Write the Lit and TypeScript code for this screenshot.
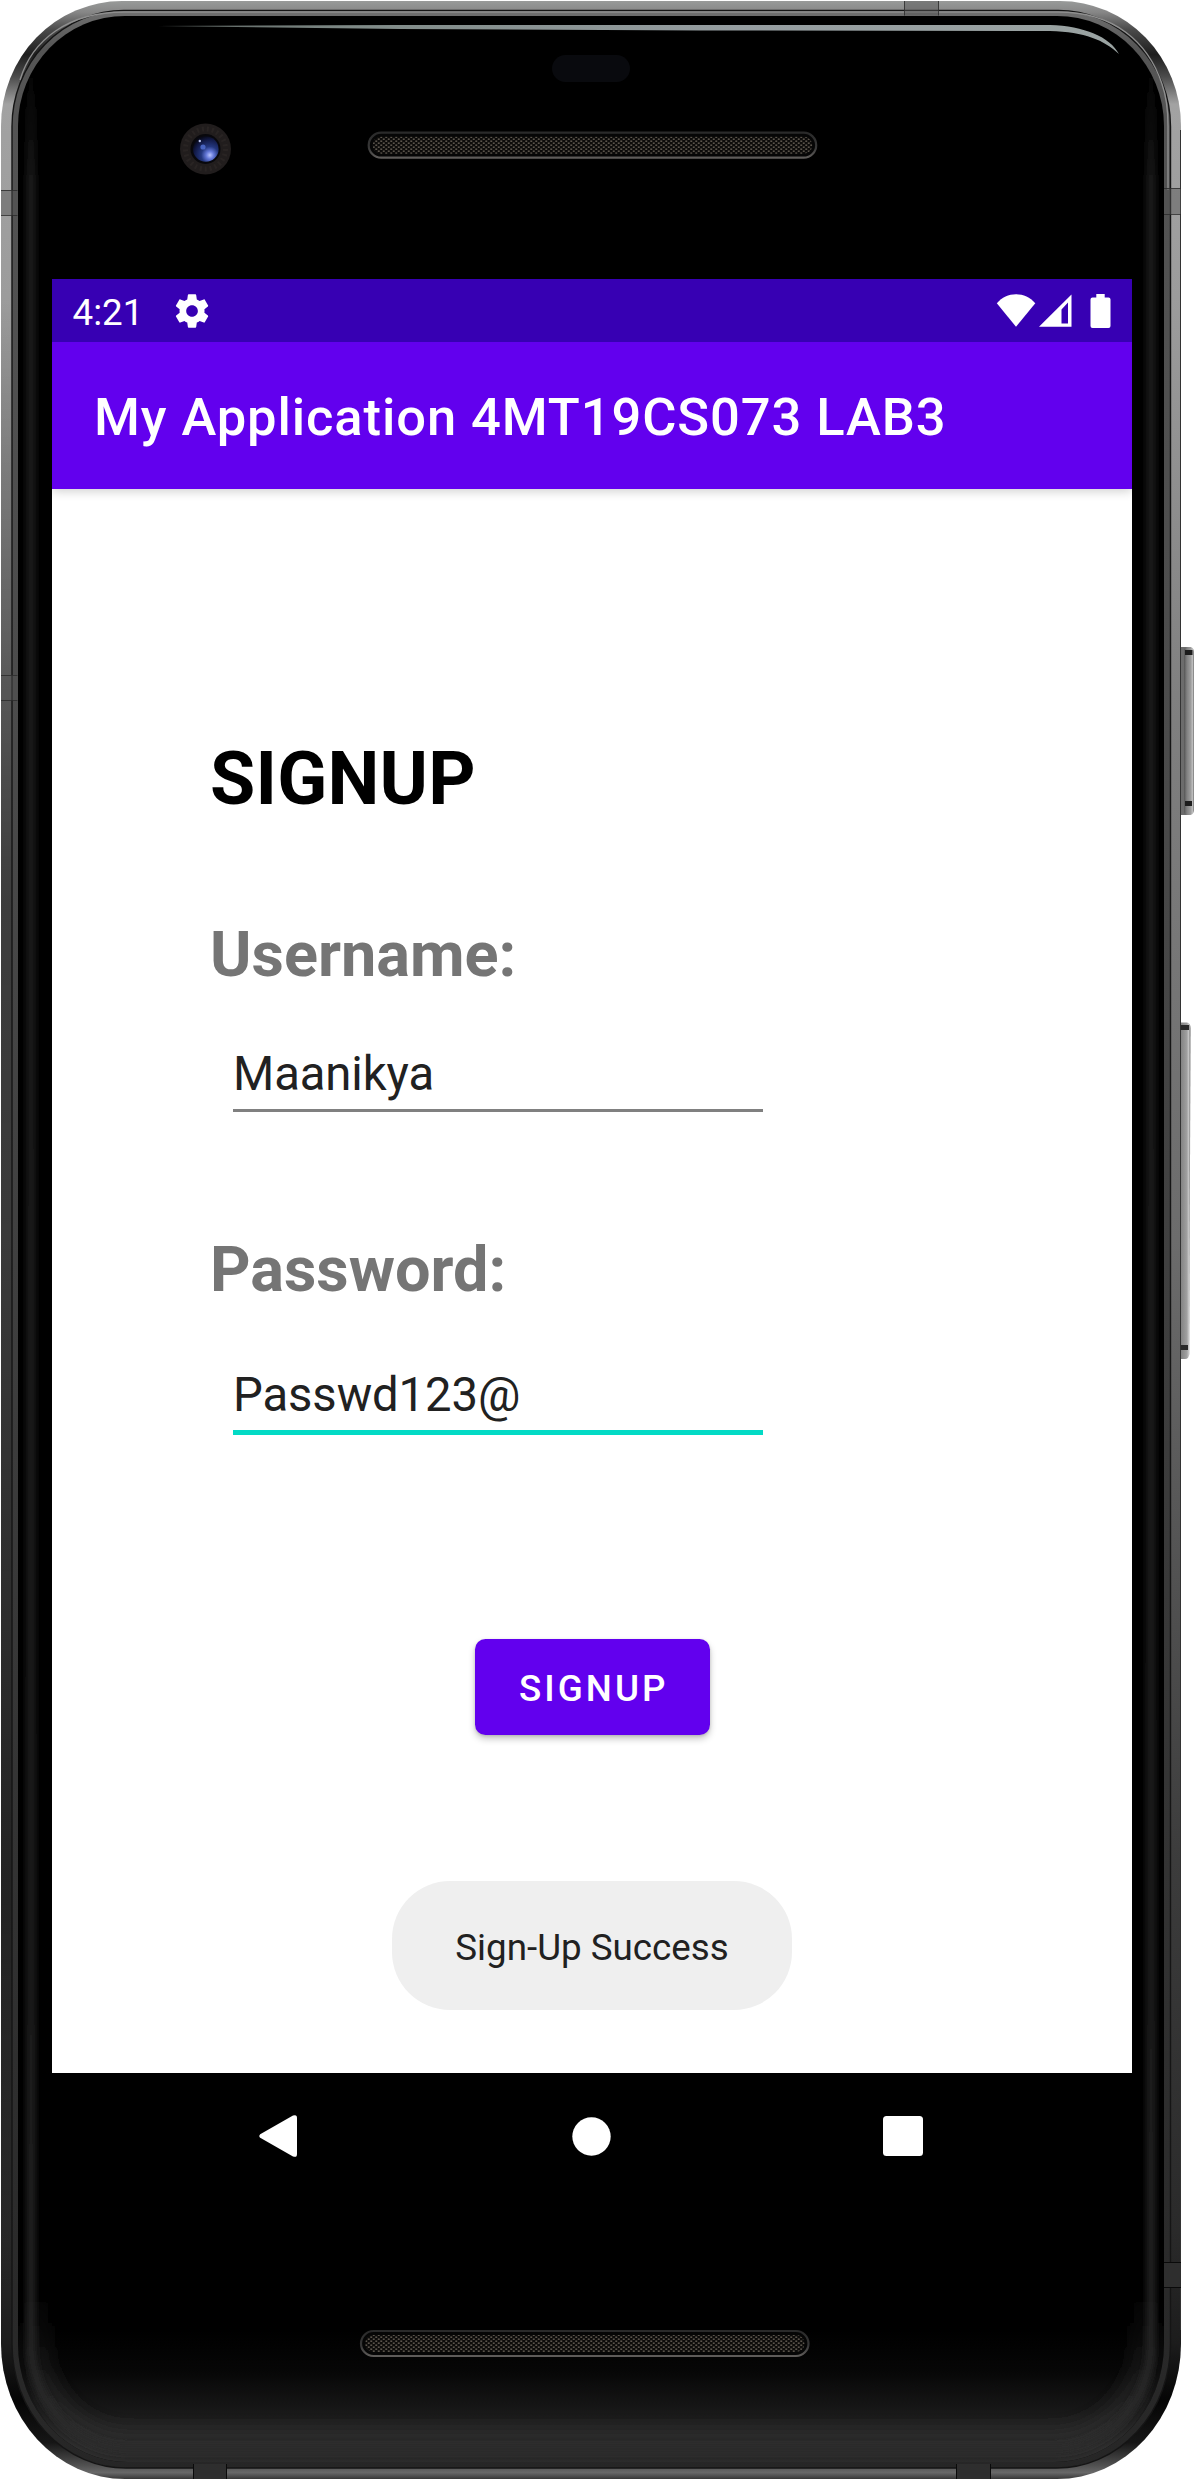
import { LitElement, html, css, svg } from "lit";
import { customElement, property } from "lit/decorators.js";

/** Hardware drawing: metal frame, glass, speakers, camera and side keys. */
@customElement("phone-shell")
class PhoneShell extends LitElement {
  static styles = css`
    :host {
      display: block;
    }
    .art {
      display: block;
      width: 1194px;
      height: 2480px;
    }
  `;

  private grille(x: number, y: number) {
    return svg`
      <rect x=${x + 1} y=${y + 1} width="447.5" height="25" rx="12.5" fill="#060606" stroke="url(#grilleRim)" stroke-width="2.2" />
      <rect x=${x + 5} y=${y + 5} width="439.5" height="17" rx="8.5" fill="url(#mesh)" />
    `;
  }

  render() {
    return html`
      <svg class="art" viewBox="0 0 1194 2480" aria-hidden="true">
        <defs>
          <linearGradient id="metal" gradientUnits="userSpaceOnUse" x1="0" y1="0" x2="0" y2="2480">
            <stop offset="0" stop-color="#9a9c9b" />
            <stop offset=".005" stop-color="#868686" />
            <stop offset=".012" stop-color="#4a4a4a" />
            <stop offset=".022" stop-color="#1e1e1e" />
            <stop offset=".031" stop-color="#4c4c4c" />
            <stop offset=".042" stop-color="#a2a2a2" />
            <stop offset=".12" stop-color="#9c9c9c" />
            <stop offset=".28" stop-color="#808080" />
            <stop offset=".5" stop-color="#6c6c6c" />
            <stop offset=".75" stop-color="#3c3c3c" />
            <stop offset=".9" stop-color="#2a2a2a" />
            <stop offset=".945" stop-color="#1c1c1c" />
            <stop offset=".968" stop-color="#050505" />
            <stop offset=".985" stop-color="#161616" />
            <stop offset=".994" stop-color="#505050" />
            <stop offset=".997" stop-color="#686868" />
            <stop offset="1" stop-color="#303030" />
          </linearGradient>
          <linearGradient id="shadeFade" gradientUnits="userSpaceOnUse" x1="0" y1="300" x2="0" y2="2300">
            <stop offset="0" stop-color="#000" stop-opacity="0" />
            <stop offset=".3" stop-color="#000" stop-opacity=".5" />
            <stop offset=".8" stop-color="#000" stop-opacity=".4" />
            <stop offset="1" stop-color="#000" stop-opacity="0" />
          </linearGradient>
          <linearGradient id="innerRing" gradientUnits="userSpaceOnUse" x1="0" y1="0" x2="0" y2="2480">
            <stop offset="0" stop-color="#777" />
            <stop offset=".02" stop-color="#555" />
            <stop offset=".3" stop-color="#4b4b4b" />
            <stop offset="1" stop-color="#262626" />
          </linearGradient>
          <linearGradient id="floor" x1="0" y1="0" x2="0" y2="1">
            <stop offset="0" stop-color="#2e2e2e" stop-opacity="0" />
            <stop offset=".3" stop-color="#2e2e2e" stop-opacity=".13" />
            <stop offset=".6" stop-color="#2e2e2e" stop-opacity=".5" />
            <stop offset=".88" stop-color="#2e2e2e" />
            <stop offset="1" stop-color="#2a2a2a" />
          </linearGradient>
          <linearGradient id="glow" gradientUnits="userSpaceOnUse" x1="0" y1="60" x2="0" y2="2452">
            <stop offset="0" stop-color="#202020" stop-opacity="0" />
            <stop offset=".05" stop-color="#202020" />
            <stop offset="1" stop-color="#2a2a2a" />
          </linearGradient>
          <linearGradient id="cornerGlow" gradientUnits="userSpaceOnUse" x1="0" y1="2290" x2="0" y2="2440">
            <stop offset="0" stop-color="#2c2c2c" stop-opacity="0" />
            <stop offset="1" stop-color="#2c2c2c" />
          </linearGradient>
          <linearGradient id="gleam" gradientUnits="userSpaceOnUse" x1="160" y1="0" x2="1120" y2="0">
            <stop offset="0" stop-color="#59615e" />
            <stop offset=".2" stop-color="#7f8a87" />
            <stop offset=".6" stop-color="#959da0" />
            <stop offset="1" stop-color="#9aa3a2" />
          </linearGradient>
          <linearGradient id="grilleRim" x1="0" y1="0" x2="0" y2="1">
            <stop offset="0" stop-color="#2a2a2a" />
            <stop offset=".6" stop-color="#383838" />
            <stop offset="1" stop-color="#5f5c5a" />
          </linearGradient>
          <linearGradient id="key" x1="0" x2="1" y1="0" y2="0">
            <stop offset="0" stop-color="#555" />
            <stop offset=".3" stop-color="#808080" />
            <stop offset=".75" stop-color="#a0a0a0" />
            <stop offset=".88" stop-color="#c8c8c8" />
            <stop offset="1" stop-color="#666" />
          </linearGradient>
          <pattern id="mesh" width="5" height="4" patternUnits="userSpaceOnUse">
            <rect width="5" height="4" fill="#0c0b0a" />
            <rect x=".3" y=".4" width="1.9" height="1.6" fill="#5a544b" />
            <rect x="2.8" y="2.4" width="1.9" height="1.6" fill="#5a544b" />
          </pattern>
          <radialGradient id="lens" cx=".66" cy=".74" r=".75">
            <stop offset="0" stop-color="#b9c4ff" />
            <stop offset=".2" stop-color="#6478d8" />
            <stop offset=".45" stop-color="#24377e" />
            <stop offset=".8" stop-color="#121a48" />
            <stop offset="1" stop-color="#080a1a" />
          </radialGradient>
          <clipPath id="glassClip">
            <path d="M125 16 H1057 A107 110 0 0 1 1164 126 V2344 A110 118 0 0 1 1054 2462 H128 A110 118 0 0 1 18 2344 V126 A107 110 0 0 1 125 16Z" />
          </clipPath>
          <filter id="soft" filterUnits="userSpaceOnUse" x="0" y="0" width="1194" height="2480">
            <feGaussianBlur stdDeviation="3.5" />
          </filter>
          <filter id="softer" filterUnits="userSpaceOnUse" x="0" y="2100" width="1194" height="380">
            <feGaussianBlur stdDeviation="10" />
          </filter>
        </defs>

        <!-- side keys -->
        <rect x="1176" y="647" width="17.5" height="168" rx="5" fill="#6c6c6c" />
        <rect x="1184" y="647" width="9.5" height="168" rx="4" fill="url(#key)" />
        <rect x="1185" y="650" width="7.5" height="5" fill="#1c1c1c" />
        <rect x="1185" y="801" width="7" height="5" fill="#1c1c1c" />
        <path d="M1176 1022.5 H1187 Q1190.5 1023 1190.5 1028 L1189.3 1354 Q1189 1359 1185 1359 H1176Z" fill="url(#key)" />
        <rect x="1181" y="1025" width="8" height="5" fill="#2a2a2a" />
        <rect x="1181" y="1345" width="7" height="5" fill="#2a2a2a" />

        <!-- metal frame -->
        <path d="M122 1 H1060 A121 125 0 0 1 1181 126 V2344 A124 135 0 0 1 1057 2479 H125 A124 135 0 0 1 1 2344 V126 A121 125 0 0 1 122 1Z" fill="url(#metal)" />
        <rect x="1" y="300" width="12" height="2000" fill="url(#shadeFade)" />
        <rect x="1180" y="130" width="1" height="2200" fill="#333" />
        <path d="M124 10.5 H1058 A112.5 116 0 0 1 1170.5 126.5 V2344 A114 124 0 0 1 1056.5 2468 H126 A114 124 0 0 1 12 2344 V126.5 A112 116 0 0 1 124 10.5Z" fill="url(#innerRing)" stroke="#151515" stroke-width="1.4" />
        <path d="M20 80 C32 40 68 12 124 12 H1058 C1114 12 1148 42 1162 84 C1167 98 1168 112 1168 126 V190" fill="none" stroke="#8f8f8f" stroke-width="1.4" />
        <path d="M125 16 H1057 A107 110 0 0 1 1164 126 V2344 A110 118 0 0 1 1054 2462 H128 A110 118 0 0 1 18 2344 V126 A107 110 0 0 1 125 16Z" fill="#000" />

        <!-- antenna bands -->
        <g fill="#555" fill-opacity=".45">
          <rect x="904" y="1" width="35" height="14.5" />
          <rect x="1" y="190" width="16.5" height="25" />
          <rect x="1164" y="188" width="17" height="26" />
          <rect x="1" y="675" width="16.5" height="25" />
        </g>
        <g fill="#2e2e2e">
          <rect x="193" y="2464" width="34" height="15" />
          <rect x="956" y="2464" width="35" height="15" />
          <rect x="1164" y="2262" width="17" height="26" />
        </g>
        <path d="M904.5 1V15.5M938.5 1V15.5M1 190.5H17.5M1 215.5H17.5M1164 188.5H1181M1164 214.5H1181M1 675.5H17.5M1 700.5H17.5" stroke="#2a2a2a" stroke-opacity=".8" />
        <path d="M193.5 2464V2479M226.5 2464V2479M956.5 2464V2479M990.5 2464V2479M1164 2262.5H1181M1164 2287.5H1181" stroke="#0a0a0a" />

        <!-- glass reflections -->
        <g clip-path="url(#glassClip)">
          <rect x="18" y="2330" width="1146" height="133" fill="url(#floor)" />
          <path d="M36 2290 V2344 A92 100 0 0 0 128 2444 H1054 A92 100 0 0 0 1146 2344 V2290" fill="none" stroke="url(#cornerGlow)" stroke-width="24" filter="url(#softer)" />
          <path d="M31 60 V2344 A97 105 0 0 0 128 2449 H1054 A97 105 0 0 0 1151 2344 V60" fill="none" stroke="url(#glow)" stroke-width="7" filter="url(#soft)" />
        </g>
        <path d="M158 26 L400 25 H1050 C1084 26 1110 37 1119 54 C1104 40 1085 32 1050 31 L700 30.5 L400 29 Z" fill="url(#gleam)" />

        <!-- proximity sensor, camera, grilles -->
        <rect x="552" y="55" width="78" height="27" rx="13.5" fill="#090a0e" />
        <circle cx="205.5" cy="149" r="25.5" fill="#211d1d" />
        <circle cx="205.5" cy="149" r="20" fill="none" stroke="#2e2928" stroke-width="5" stroke-dasharray="2 3" stroke-opacity=".6" />
        <circle cx="205.5" cy="149" r="15" fill="#08080c" />
        <circle cx="205.8" cy="149" r="12.8" fill="url(#lens)" />
        <circle cx="203" cy="147" r="2.6" fill="#5472d6" fill-opacity=".8" />
        <circle cx="199.8" cy="141" r="1.2" fill="#b8c2ee" />
        ${this.grille(367.7, 131.7)} ${this.grille(360, 2330)}
      </svg>
    `;
  }
}

@customElement("status-bar")
class StatusBar extends LitElement {
  static styles = css`
    :host {
      display: flex;
      justify-content: space-between;
      height: 63px;
      background: #3700b3;
      color: #fff;
      font: 400 36.75px/43px Roboto, sans-serif;
    }
    .start,
    .end {
      display: flex;
      align-items: center;
    }
    .start {
      padding-left: 20.5px;
      gap: 29px;
    }
    .clock {
      padding-top: 3px;
    }
    .end {
      padding-right: 21px;
    }
    svg {
      display: block;
      fill: #fff;
    }
    .gear {
      width: 40px;
      height: 40px;
    }
  `;

  render() {
    return html`
      <div class="start">
        <span class="clock">4:21</span>
        <svg class="gear" viewBox="0 0 24 24">
          <path
            d="M19.44 12.99c.04-.32.07-.65.07-.99s-.03-.67-.07-.99l2.1-1.65c.19-.15.24-.42.12-.64l-2-3.46c-.12-.22-.38-.3-.61-.22l-2.48 1c-.52-.4-1.07-.73-1.68-.98l-.38-2.64A.49.49 0 0 0 14.02 2h-4c-.25 0-.46.18-.49.42l-.38 2.64c-.61.25-1.17.59-1.68.98l-2.48-1c-.23-.09-.49 0-.61.22l-2 3.46c-.13.22-.07.49.12.64l2.1 1.65c-.04.32-.07.66-.07.99s.03.67.07.99l-2.1 1.65c-.19.15-.24.42-.12.64l2 3.46c.12.22.38.3.61.22l2.48-1c.52.4 1.07.73 1.68.98l.38 2.64c.03.24.24.42.49.42h4c.25 0 .46-.18.49-.42l.38-2.64c.61-.25 1.17-.59 1.68-.98l2.48 1c.23.09.49 0 .61-.22l2-3.46c.12-.22.07-.49-.12-.64l-2.1-1.65zM12.02 15.5c-1.93 0-3.5-1.57-3.5-3.5s1.57-3.5 3.5-3.5 3.5 1.57 3.5 3.5-1.57 3.5-3.5 3.5z"
          />
        </svg>
      </div>
      <div class="end">
        <svg width="115" height="36" viewBox="0 0 115 36">
          <path d="M0.8 10.2 C6 4.2 12.5 1.2 20 1.2 S34 4.2 39.3 10.2 L20 33.8Z" />
          <path fill-rule="evenodd" d="M43 33.8 L75.5 1.5 V33.8Z M65.5 16.6 V30.6 H72 V9.6Z" />
          <path d="M100.3 1 H108.7 V4.5 H112.5 Q114.5 4.5 114.5 6.5 V33 Q114.5 35 112.5 35 H96.5 Q94.5 35 94.5 33 V6.5 Q94.5 4.5 96.5 4.5 H100.3Z" />
        </svg>
      </div>
    `;
  }
}

@customElement("text-field")
class TextField extends LitElement {
  static styles = css`
    :host {
      display: block;
      font-family: Roboto, sans-serif;
    }
    .label {
      font-weight: 700;
      font-size: 63px;
      line-height: 75px;
      color: #757575;
    }
    .box {
      width: 530px;
      margin: 55px 0 0 23px;
      padding-bottom: 7px;
      border-bottom: 3px solid #808080;
      font-size: 47.25px;
      line-height: 55px;
      letter-spacing: -0.1px;
      color: #212121;
    }
    .box.focused {
      margin-top: 61px;
      border-bottom: 5px solid #03dac5;
    }
  `;

  @property() label = "";
  @property() value = "";
  @property({ type: Boolean }) focused = false;

  render() {
    return html`
      <div class="label">${this.label}</div>
      <div class="box ${this.focused ? "focused" : ""}">${this.value}</div>
    `;
  }
}

@customElement("nav-bar")
class NavBar extends LitElement {
  static styles = css`
    :host {
      display: flex;
      justify-content: space-between;
      align-items: center;
      height: 126px;
      padding: 0 209px 0 206.5px;
      background: #000;
    }
    svg {
      display: block;
      fill: #fff;
    }
    .home {
      margin-left: 4px;
    }
  `;

  render() {
    return html`
      <svg width="38" height="42" viewBox="0 0 38 42">
        <path d="M1.2 19.2 L34 0.6 Q38 -1 38 3 V39 Q38 43 34 41.4 L1.2 22.8 Q-.6 21 1.2 19.2Z" />
      </svg>
      <svg class="home" width="39" height="39" viewBox="0 0 39 39"><circle cx="19.5" cy="19.5" r="19.2" /></svg>
      <svg width="40" height="40" viewBox="0 0 40 40"><rect width="40" height="40" rx="3.5" /></svg>
    `;
  }
}

@customElement("app-root")
class AppRoot extends LitElement {
  static styles = css`
    :host {
      display: block;
      font-family: Roboto, sans-serif;
    }
    .device {
      position: relative;
      box-sizing: border-box;
      width: 1194px;
      height: 2480px;
      padding: 279px 62px 281px 52px;
      overflow: hidden;
      background: #fff;
    }
    .shell {
      position: absolute;
      inset: 0;
    }
    .screen {
      position: relative;
      display: flex;
      flex-direction: column;
      width: 1080px;
      height: 1920px;
      background: #fff;
    }
    .appbar {
      box-sizing: border-box;
      height: 147px;
      padding: 4px 42px 0;
      background: #6200ee;
      color: #fff;
      font-weight: 500;
      font-size: 52.5px;
      line-height: 143px;
      letter-spacing: 0.0172em;
      white-space: nowrap;
      box-shadow: 0 2px 10px rgba(0, 0, 0, 0.2);
      clip-path: inset(0 0 -20px 0);
    }
    .content {
      display: flex;
      flex-direction: column;
      flex: 1;
      padding: 247px 0 0 158px;
    }
    h1 {
      margin: 0 0 95px;
      font-weight: 700;
      font-size: 73.5px;
      line-height: 86px;
      letter-spacing: 0.2px;
      color: #000;
    }
    .second {
      margin-top: 120px;
    }
    .actions {
      display: flex;
      flex-direction: column;
      align-items: center;
      gap: 146px;
      margin: 204px 0 0 -158px;
    }
    .signup {
      box-sizing: border-box;
      width: 235px;
      height: 96px;
      margin: 0 0 0 1px;
      padding: 3px 0 0 44px;
      border: 0;
      border-radius: 10.5px;
      background: #6200ee;
      color: #fff;
      font: 500 36.75px/93px Roboto, sans-serif;
      letter-spacing: 3.05px;
      text-align: left;
      box-shadow: 0 4px 7px rgba(0, 0, 0, 0.22), 0 1px 3px rgba(0, 0, 0, 0.14);
    }
    .toast {
      box-sizing: border-box;
      width: 400px;
      height: 129px;
      padding: 4px 0 0;
      border-radius: 58px;
      background: #efefef;
      color: #212121;
      font-size: 36.75px;
      line-height: 125px;
      text-align: center;
    }
  `;

  render() {
    return html`
      <div class="device">
        <phone-shell class="shell"></phone-shell>
        <div class="screen">
          <status-bar></status-bar>
          <div class="appbar">My Application 4MT19CS073 LAB3</div>
          <div class="content">
            <h1>SIGNUP</h1>
            <text-field label="Username:" value="Maanikya"></text-field>
            <text-field class="second" label="Password:" value="Passwd123@" focused></text-field>
            <div class="actions">
              <button class="signup">SIGNUP</button>
              <div class="toast">Sign-Up Success</div>
            </div>
          </div>
          <nav-bar></nav-bar>
        </div>
      </div>
    `;
  }
}
